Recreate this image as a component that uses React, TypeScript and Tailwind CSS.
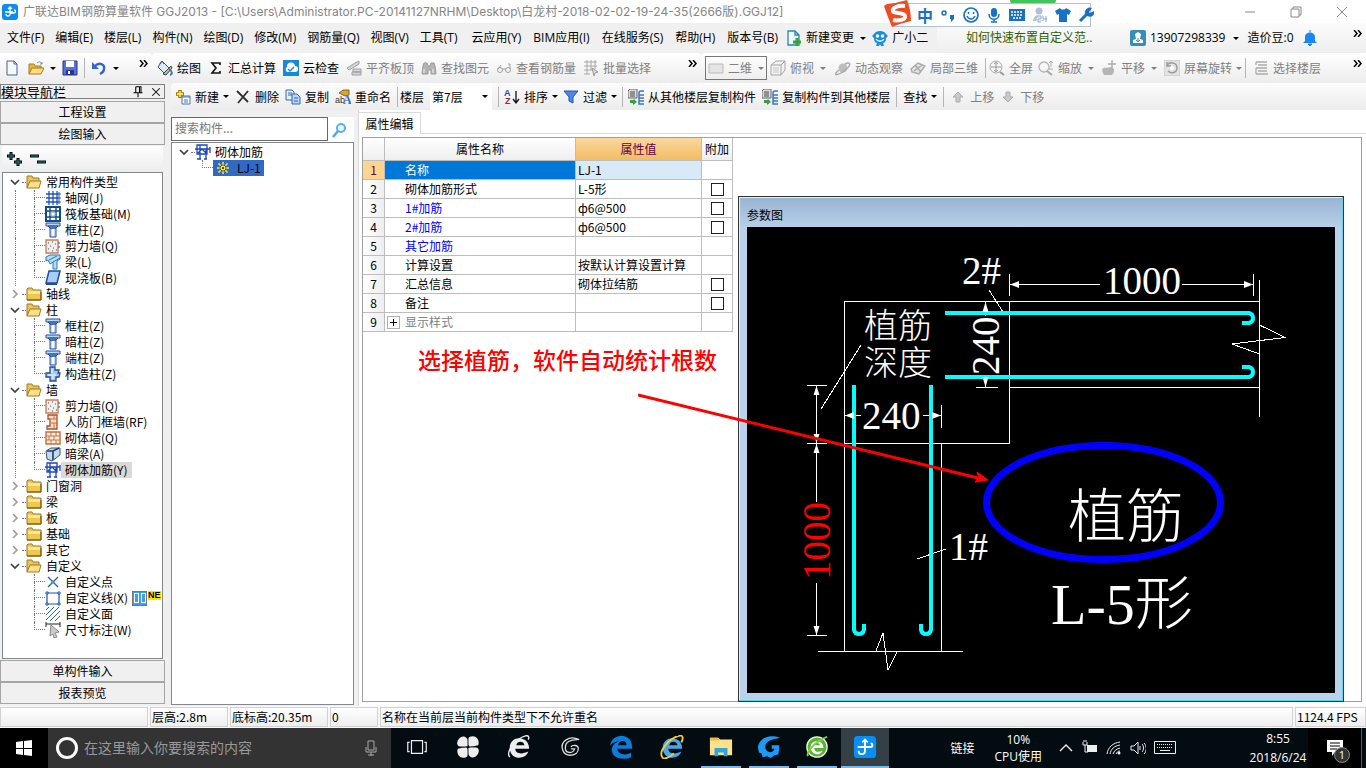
import React from 'react';
import type { ReactNode } from 'react';

const Svg = ({ children, className = 'size-4' }: { children: ReactNode; className?: string }) => (
  <svg viewBox="0 0 16 16" fill="none" aria-hidden="true" className={`shrink-0 ${className}`}>
    {children}
  </svg>
);

const Caret = () => (
  <svg viewBox="0 0 6 3" aria-hidden="true" className="h-[3px] w-1.5 shrink-0 fill-current">
    <path d="M0 0h6L3 3z" />
  </svg>
);

const Logo = () => (
  <Svg>
    <rect width="16" height="16" rx="3" fill="#0a8cf0" />
    <path d="M8 3v7a2 2 0 0 1-4 0M3 8h8M12 6a1.500 1.500 0 0 1 0 3H8M6 5l2-2 2 2" stroke="#fff" strokeWidth="1.3" />
  </Svg>
);

const icons = {
  file: <Svg><path d="M3 1h7l3 3v11H3z" fill="#f6faff" stroke="#45638f" /><path d="M10 1v3h3" stroke="#45638f" /></Svg>,
  open: <Svg><path d="M1 14V4h5l1 2h6v3" fill="#e9b43f" stroke="#a87b1d" /><path d="M1 14l3-6h12l-3 6z" fill="#ffdd80" stroke="#a87b1d" /><path d="M9 3c2-2 4-1 5 1m0-2v2h-2" stroke="#6d8fa8" /></Svg>,
  save: <Svg><path d="M1 1h14v14H1z" fill="#5b6fd6" stroke="#27358f" /><path d="M4 1h8v6H4z" fill="#fff" /><path d="M4 10h8v5H4z" fill="#27358f" /><path d="M6 11h2v3H6z" fill="#fff" /></Svg>,
  undo: <Svg><path d="M4 6c4-4 10-2 9 3 0 2-2 4-4 5" stroke="#3465c8" strokeWidth="2.4" /><path d="M1 2v7h7z" fill="#3465c8" /></Svg>,
  draw: <Svg><path d="M5 1l7 7-5 5-6-6z" fill="#dceaf8" stroke="#31577c" /><path d="M3 4c0-3 3-3 4 0" stroke="#31577c" /><path d="M6 14l8-8 1 2-6 7z" fill="#e7ba4d" stroke="#24476a" /><path d="M12 9c3 2 4 5 1 6" stroke="#3279cf" strokeWidth="2" /></Svg>,
  sigma: <Svg><path d="M12 5V3H4l4 5-4 5h8v-2" stroke="#111" strokeWidth="1.6" /></Svg>,
  cloud: <Svg><path d="M0 0h16v16H0z" fill="#1689d8" /><path d="M4 12a3 3 0 0 1 0-5 4 4 0 0 1 8-1 3 3 0 0 1 0 6z" fill="#fff" /><path d="M5 9l2 2 4-4" stroke="#1689d8" strokeWidth="1.4" /></Svg>,
  align: <Svg><path d="M1 8l8-5 4-2v3L3 10zM6 12h9v3H6zM7 9h8v3H7z" fill="#d4d4d4" stroke="#a0a0a0" /></Svg>,
  find: <Svg><path d="M2 6l1-3h3l1 3h2l1-3h3l1 3 1 8h-5v-4H7v4H1z" fill="#b4b4b4" stroke="#999" /><path d="M3 9v4M12 9v4" stroke="#f4f4f4" /></Svg>,
  glasses: <Svg><circle cx="4" cy="10" r="2.5" stroke="#a0a0a0" /><circle cx="12" cy="10" r="2.5" stroke="#a0a0a0" /><path d="M6 9h4M2 9l3-4M14 9V4h-2" stroke="#a0a0a0" /></Svg>,
  batch: <Svg><path d="M1 2h13M1 6h13M1 10h9M4 0v14M8 0v10M12 0v9M1 14h6" stroke="#a8a8a8" /><path d="M9 8l6 4-3 1-1 3z" fill="#ddd" stroke="#999" /></Svg>,
  plane: <Svg><path d="M1 4h14v9H1z" fill="#e4e4e4" stroke="#bbb" /></Svg>,
  cube: <Svg><path d="M1 5l5-4h9v9l-4 5H1zM1 5h10v10M11 5l4-4" fill="#f2f2f2" stroke="#a5a5a5" /><path d="M3 7h6v6H3z" fill="#ddd" /></Svg>,
  orbit: <Svg><circle cx="8" cy="8" r="4.5" fill="#bdbdbd" /><path d="M4 10c-7 6-2 6 5 1s8-10 1-7" stroke="#aaa" strokeWidth="1.5" /></Svg>,
  local: <Svg><path d="M1 9l7-6 7 3-6 8-7-2zM5 5l6 7M4 11l8-6" fill="#e2e2e2" stroke="#aaa" strokeWidth="1.4" /></Svg>,
  full: <Svg><circle cx="7" cy="7" r="6" fill="#f5f5f5" stroke="#aaa" /><path d="M7 2v10M2 7h10M5 4l2-2 2 2M5 10l2 2 2-2" stroke="#999" /><path d="M11 12l4 3" stroke="#999" strokeWidth="2" /></Svg>,
  zoom: <Svg><circle cx="6" cy="7" r="5" stroke="#b5b5b5" strokeWidth="1.3" /><path d="M9 11l5 4" stroke="#aaa" strokeWidth="2" /><path d="M13 1v6M11 3l2-2 2 2M11 9h4" stroke="#aaa" /></Svg>,
  pan: <Svg><path d="M3 15c-4-6 0-9 2-7l5-1c4 1 4 5 1 8z" fill="#b5b5b5" /><path d="M11 0v8M7 4h8" stroke="#aaa" strokeWidth="1.3" /></Svg>,
  rotate: <Svg><path d="M0 0h16v16H0z" fill="#e3e3e3" stroke="#c4c4c4" /><path d="M3 5c4-4 10-2 10 3s-6 6-9 3M3 2v4h4" stroke="#999" strokeWidth="1.4" /><circle cx="8" cy="8" r="2" fill="#fff" /></Svg>,
  floors: <Svg><path d="M3 2h11M5 5h9M3 8h11M5 11h9M3 14h12M3 2v3M3 8v6" stroke="#aaa" strokeWidth="1.3" /></Svg>,
  create: <Svg><path d="M5 1v8M1 5h8" stroke="#9b7600" strokeWidth="3.6" /><path d="M5 2v6M2 5h6" stroke="#ffdf49" strokeWidth="1.8" /><path d="M7 7h8v8H7z" fill="#fff" stroke="#4d70b5" /><path d="M7 8h8M9 11h4M9 13h4" stroke="#4d70b5" strokeWidth="1.2" /></Svg>,
  remove: <Svg><path d="M2 2l11 11M13 2L3 14" stroke="#303030" strokeWidth="1.8" /></Svg>,
  copy: <Svg><path d="M1 1h6l2 2v8H1z" fill="#e5f0ff" stroke="#3966a8" /><path d="M7 5h5l3 3v7H7z" fill="#b9d5fb" stroke="#3966a8" /><path d="M3 4h4M3 6h4M9 9h4M9 12h4" stroke="#3966a8" /></Svg>,
  rename: <Svg><path d="M4 4l4-3h6v5l-4 1z" fill="#d7a72a" stroke="#84651d" /><text x="0" y="14" fontSize="9" fill="#333" fontFamily="Liberation Sans">ab</text><text x="8" y="15" fontSize="12" fontWeight="bold" fill="#326bd0" fontFamily="Liberation Serif">A</text></Svg>,
  sort: <Svg><text x="0" y="7" fontSize="9" fontWeight="bold" fill="#1f48ad" fontFamily="Liberation Sans">A</text><text x="1" y="15" fontSize="9" fontWeight="bold" fill="#a22a2a" fontFamily="Liberation Sans">Z</text><path d="M12 2v12M9 10l3 4 3-4" stroke="#111" strokeWidth="1.3" /></Svg>,
  filter: <Svg><path d="M1 2h14L10 8v6l-4-2V8z" fill="#4c86e8" stroke="#2857a8" /></Svg>,
  floorCopy: <Svg><path d="M2 0h7v9H0V2z" fill="#ddd" stroke="#666" /><path d="M2 3h5M2 5h5M2 7h5" stroke="#444" /><path d="M16 2h-3q-2 0-2 2v11h5M11 6h5M11 9h5M11 12h5" stroke="#3975cd" strokeWidth="1.5" /><path d="M2 11h4l-1-2 4 4-4 3v-2H2z" fill="#36a143" /></Svg>,
  up: <Svg><path d="M8 3l5 5h-3v5H6V8H3z" fill="#cacaca" stroke="#aaa" /></Svg>,
  down: <Svg><path d="M8 13l5-5h-3V3H6v5H3z" fill="#cacaca" stroke="#aaa" /></Svg>,
  change: <Svg><path d="M2 1h7l4 4v10H2zM9 1v4h4" fill="#f4fbff" stroke="#2486b9" strokeWidth="1.3" /><path d="M11 8v8M7 12h8" stroke="#36a143" strokeWidth="3" /></Svg>,
  robot: <Svg><path d="M2 4c2-4 10-4 12 0l2 2-2 2c0 4-2 5-3 5l1 3H9l-1-2-1 2H4l1-3c-1 0-3-1-3-5L0 6z" fill="#168ce0" /><circle cx="5.5" cy="6" r="1.800" fill="#fff" /><circle cx="10.500" cy="6" r="1.800" fill="#fff" /><path d="M4 9c2 3 6 3 8 0" stroke="#fff" strokeWidth="1.300" /></Svg>,
  user: <Svg><rect width="16" height="16" rx="2" fill="#378db9" /><path d="M3 13v-3l3-1-1-5 3-2 3 2-1 5 3 1v3z" fill="#fff" /><path d="M8 8v4M6 10l2 2 2-2" stroke="#378db9" /></Svg>,
  bell: <Svg><path d="M3 11V7c0-6 10-6 10 0v4l2 2H1z" fill="#1c86f2" /><path d="M8 0v2M6 14h4l-2 2z" stroke="#1c86f2" fill="#1c86f2" /></Svg>,
  search: <Svg><circle cx="9" cy="6" r="4" fill="#eef8ff" stroke="#53b1ed" strokeWidth="2" /><path d="M6 9l-5 6" stroke="#53a7e5" strokeWidth="2.5" /></Svg>,
  folder: <Svg><path d="M1 3l1-1h4l1 2h8v10H1z" fill="#f2c84b" stroke="#9c7a28" /><path d="M2 5h12v3H2z" fill="#ffe89e" /><path d="M1 14h14V6" stroke="#6b5014" /></Svg>,
  folderOpen: <Svg><path d="M1 14V2h5l1 2h6v3" fill="#eec257" stroke="#9c7a28" /><path d="M1 14l3-7h11l-2 7z" fill="#ffdf87" stroke="#9c7a28" /></Svg>,
  grid: <Svg><path d="M4 1v14M8 1v14M12 1v14M1 4h12M1 8h12M1 12h12" stroke="#2854b5" strokeWidth="1.3" /><path d="M13 3h2v2h-2zM13 7h2v2h-2zM13 11h2v2h-2z" fill="#fff" stroke="#2854b5" /></Svg>,
  raft: <Svg><path d="M1 1h14v14H1z" fill="#fff" stroke="#124b8c" strokeWidth="2" /><path d="M1 5h14M1 11h14M5 1v14M11 1v14" stroke="#124b8c" strokeWidth="1.4" /><path d="M6 6h4v4H6z" stroke="#87aad2" /></Svg>,
  column: <Svg><path d="M1 1h14v3H1zM3 4h10l-2 2H5zM5 6h6v9H5z" fill="#b9d7fa" stroke="#244fa0" /><path d="M8 7v7" stroke="#fff" strokeWidth="2" /></Svg>,
  shear: <Svg><path d="M1 2h12v13H1z" fill="#eee" stroke="#cb805a" strokeWidth="1.4" /><path d="M3 5h1M7 4h1M10 6h1M5 8h1M3 11h1M8 10h1M11 12h1M7 13h1M13 5h2M13 9h2" stroke="#555" /></Svg>,
  beam: <Svg><path d="M1 3l4-2h10v4l-3 2v8H8V8l-3 2-2-4-2 1z" fill="#b7dcf5" stroke="#2c78bd" /><path d="M4 6l8-4M8 8l7-4" stroke="#2c78bd" /></Svg>,
  slab: <Svg><path d="M4 1h11l-3 12H1z" fill="#a8cef7" stroke="#204d9c" strokeWidth="1.5" /><path d="M1 14h11" stroke="#204d9c" strokeWidth="2" /></Svg>,
  structural: <Svg><path d="M5 1h5v3h4l-1 3h2l-1 4h-3v4H5v-4H1V7h4z" fill="#a8c8ed" stroke="#244e8e" strokeWidth="1.3" /><path d="M7 3v4M3 9h8M8 10v3" stroke="#fff" /></Svg>,
  door: <Svg><path d="M3 1h9v14H2v-3h3V5H3z" fill="#ffe2ca" stroke="#ac4d25" strokeWidth="1.3" /><path d="M6 5h6M6 9h6M9 1v4M9 9v6" stroke="#cb6c3d" /></Svg>,
  brick: <Svg><path d="M1 2h14v12H1z" fill="#fff2e4" stroke="#cb6c3d" strokeWidth="1.4" /><path d="M1 6h14M1 10h14M6 2v4M11 2v4M4 6v4M9 6v4M6 10v4M11 10v4" stroke="#cb6c3d" /></Svg>,
  hiddenBeam: <Svg><path d="M1 5l5-3h9v7l-8 6-5-2z" fill="#c3d9f0" stroke="#3a5579" /><path d="M2 5h6l6-3M8 5v9" stroke="#243e65" strokeWidth="1.600" /></Svg>,
  masonry: <Svg><path d="M2 1h10v9H2zM0 5h15M5 1v14M11 5v10M2 15h4M9 15h3M3 9l4-4 4 4M15 3v6" stroke="#1e48ba" strokeWidth="1.3" /></Svg>,
  point: <Svg><path d="M3 3l4 4M13 3L9 7M3 13l4-4M13 13L9 9" stroke="#2866ac" strokeWidth="1.300" /><path d="M7 7h2v2H7z" fill="#fff" stroke="#2866ac" /></Svg>,
  line: <Svg><path d="M2 3h12v11H2z" stroke="#1755bc" strokeWidth="1.2" /><path d="M1 2h2v2H1zM13 2h2v2h-2zM1 13h2v2H1zM13 13h2v2h-2z" fill="#fff" stroke="#1755bc" /></Svg>,
  area: <Svg><path d="M1 4l3-3M1 9l8-8M1 14L14 1M5 15L15 5M10 15l5-5" stroke="#2868c3" /></Svg>,
  dimension: <Svg><path d="M1 0v5M15 0v5M1 2h14" stroke="#222" /><path d="M6 3l8 7-4 1 2 4-3 1-1-4-3 2z" fill="#ccc" stroke="#888" /></Svg>,
};

type IconName = keyof typeof icons;

interface ToolProps {
  icon?: IconName;
  label: string;
  caret?: boolean;
  tight?: boolean;
  disabled?: boolean;
}

const Tool = ({ icon, label, caret, tight, disabled }: ToolProps) => (
  <button
    type="button"
    disabled={disabled}
    className={`flex h-6 shrink-0 items-center gap-1 ${disabled ? 'text-[#808080]' : 'text-black'}`}
  >
    {icon && icons[icon]}
    <span>{label}</span>
    {caret && <span className={tight ? '' : 'px-0.5'}><Caret /></span>}
  </button>
);

const Divider = () => <span className="h-5 w-px shrink-0 bg-[#b5b5b5]" />;

const More = () => (
  <button type="button" aria-label="更多" className="mb-2.5 ml-auto shrink-0">
    <svg viewBox="0 0 9 7" aria-hidden="true" fill="none" className="h-[7px] w-[9px]">
      <path d="M1 0l3 3.500L1 7M5 0l3 3.500L5 7" stroke="#000" strokeWidth="1.500" />
    </svg>
  </button>
);

const localMenus = ['文件(F)', '编辑(E)', '楼层(L)', '构件(N)', '绘图(D)', '修改(M)', '钢筋量(Q)', '视图(V)', '工具(T)'];
const serviceMenus = ['云应用(Y)', 'BIM应用(I)', '在线服务(S)', '帮助(H)', '版本号(B)'];

const TitleBar = () => (
  <header className="relative flex h-[23px] items-center bg-white text-[#858585]">
    <span className="ml-0.5"><Logo /></span>
    <h1 className="ml-[5px] flex-1 truncate font-[Inter,Noto_Sans_CJK_SC,sans-serif] text-xs">
      广联达BIM钢筋算量软件 GGJ2013 - [C:\Users\Administrator.PC-20141127NRHM\Desktop\白龙村-2018-02-02-19-24-35(2666版).GGJ12]
    </h1>
    <div className="flex w-[124px] items-center gap-[30px]">
      <button type="button" aria-label="最小化"><Svg><path d="M3 8h10" stroke="#888" /></Svg></button>
      <button type="button" aria-label="还原"><Svg><path d="M3 5h8v8H3zM5 5V3h8v8h-2" stroke="#888" /></Svg></button>
      <button type="button" aria-label="关闭"><Svg><path d="M3 3l10 10M13 3L3 13" stroke="#888" /></Svg></button>
    </div>
    <ImeBar />
  </header>
);

const ImeBar = () => (
  <div className="absolute top-0 right-[275px] z-10 pt-[3px] text-[#1a70c5]">
    <div className="absolute top-0 right-[35px] h-1 w-[46px] rounded-b-sm bg-[#43c45c]" />
    <div className="relative flex h-6 w-[198px] items-center gap-[7px] border border-[#afc2da] bg-white pl-[23px]">
      <svg viewBox="0 0 28 28" className="absolute -top-1 -left-2.5 size-7" aria-hidden="true">
        <path d="M3 4Q13 3 23 0q4 10 4 21-9 2-19 6Q3 15 0 6z" fill="#ee4d24" />
        <path d="M21 6c-7-1-13 2-12 5s11 1 12 5-7 5-12 4" fill="none" stroke="#fff" strokeWidth="4" />
      </svg>
      <span className="text-base leading-5 font-bold">中</span>
      <Svg><circle cx="4" cy="6" r="2" stroke="currentColor" strokeWidth="1.5" /><path d="M10 8h4v4l-3 3v-3h-1z" fill="currentColor" /></Svg>
      <Svg><circle cx="8" cy="8" r="7" stroke="currentColor" strokeWidth="1.7" /><path d="M5.500 5v2M10.500 5v2M4 9c2 4 6 4 8 0" stroke="currentColor" strokeWidth="1.5" /></Svg>
      <Svg><rect x="5" y="1" width="6" height="9" rx="3" fill="currentColor" /><path d="M3 7c0 7 10 7 10 0M8 12v3M5 15h6" stroke="currentColor" strokeWidth="1.5" /></Svg>
      <Svg><path d="M0 2h16v12H0z" fill="currentColor" /><path d="M2 5h12M2 8h12M4 11h8" stroke="#fff" strokeDasharray="2 1" strokeWidth="1.5" /></Svg>
      <Svg><circle cx="7" cy="4" r="3.500" fill="#afc0db" /><path d="M1 14c0-7 10-8 11-4v4z" fill="#afc0db" /><path d="M6 9h3v3H6v3h3M11 9v3h4M14 9v6" stroke="#fff" strokeWidth="2.500" /><path d="M6 9h3v3H6v3h3M11 9v3h4M14 9v6" stroke="#8ba2c6" /></Svg>
      <Svg><path d="M5 1c1 2 5 2 6 0l5 3-2 4-2-1v8H4V7L2 8 0 4z" fill="currentColor" /></Svg>
      <Svg><path d="M2 14l7-7" stroke="currentColor" strokeWidth="3" /><path d="M14 1l-3 4 1 1 4-2c1 5-3 7-7 5L7 7c-1-4 3-8 7-6z" fill="currentColor" /></Svg>
    </div>
  </div>
);

const MenuBar = () => (
  <nav className="flex h-[30px] items-center overflow-hidden bg-[#f0f0f0] font-[Open_Sans,Noto_Sans_CJK_SC,sans-serif]">
    <div className="flex w-[937px] shrink-0 items-center pl-[7px]">
      <div className="flex gap-[11px]">
        {localMenus.map((menu) => <button key={menu} type="button">{menu}</button>)}
      </div>
      <div className="ml-3.5 flex gap-3">
        {serviceMenus.map((menu) => <button key={menu} type="button">{menu}</button>)}
      </div>
      <div className="ml-2 flex gap-1"><Tool icon="change" label="新建变更" caret /><Tool icon="robot" label="广小二" /></div>
    </div>
    <div className="flex h-full w-[189px] shrink-0 items-center bg-linear-to-b from-[#fbfbfb] to-[#eeeeee] pl-[29px]">
      <a href="#help" className="text-[#306000]">如何快速布置自定义范..</a>
    </div>
    <div className="flex h-full flex-1 items-center gap-1 rounded-l bg-linear-to-b from-[#fbfbfb] to-[#eeeeee] pr-1 pl-1">
      <button type="button" className="flex items-center gap-1">
        {icons.user}<span>13907298339</span><span className="px-1"><Caret /></span>
      </button>
      <span>造价豆:0</span>
      <button type="button" aria-label="消息" className="pl-1">{icons.bell}</button>
      <More />
    </div>
  </nav>
);

const ViewToolbar = () => (
  <div className="flex h-[30px] overflow-hidden">
    <div className="flex w-[152px] shrink-0 items-center rounded-r bg-linear-to-b from-white to-[#ececec] pr-1 pl-1">
      <button type="button" aria-label="新建工程">{icons.file}</button>
      <button type="button" aria-label="打开" className="ml-2 flex items-center gap-1.5">{icons.open}<Caret /></button>
      <button type="button" aria-label="保存" className="mr-1.5 ml-1.5">{icons.save}</button>
      <Divider />
      <button type="button" aria-label="撤销" className="ml-1.5 flex items-center gap-1.5">{icons.undo}<Caret /></button>
      <More />
    </div>
    <div className="flex w-[549px] shrink-0 items-center gap-[7px] rounded bg-linear-to-b from-white to-[#ececec] pr-1 pl-[5px]">
      <Tool icon="draw" label="绘图" />
      <Tool icon="sigma" label="汇总计算" />
      <Tool icon="cloud" label="云检查" />
      <Tool icon="align" label="平齐板顶" disabled />
      <Tool icon="find" label="查找图元" disabled />
      <Tool icon="glasses" label="查看钢筋量" disabled />
      <Tool icon="batch" label="批量选择" disabled />
      <More />
    </div>
    <div className="flex min-w-0 flex-1 items-center gap-[7px] rounded-l bg-linear-to-b from-white to-[#ececec] pr-1 pl-1">
      <label className="-mr-1 flex h-6 w-[62px] shrink-0 items-center border border-[#777] pl-0.5 text-[#808080]">
        {icons.plane}
        <select aria-label="视图维度" disabled className="ml-1 w-[30px] appearance-none"><option>二维</option></select>
        <Caret />
      </label>
      <Tool icon="cube" label="俯视" caret disabled />
      <Tool icon="orbit" label="动态观察" disabled />
      <Tool icon="local" label="局部三维" disabled />
      <Divider />
      <div className="-mr-1 -ml-1 flex gap-[5px]">
        <Tool icon="full" label="全屏" disabled />
        <Tool icon="zoom" label="缩放" caret disabled />
        <Tool icon="pan" label="平移" caret disabled />
        <Tool icon="rotate" label="屏幕旋转" caret tight disabled />
      </div>
      <Divider />
      <Tool icon="floors" label="选择楼层" disabled />
      <More />
    </div>
  </div>
);

const ComponentToolbar = () => (
  <div className="flex h-[27px] shrink-0 items-center gap-1.5 overflow-hidden rounded-l bg-linear-to-b from-[#fcfcfc] to-[#ececec] pl-1">
    <Tool icon="create" label="新建" caret tight />
    <Tool icon="remove" label="删除" />
    <Tool icon="copy" label="复制" />
    <Tool icon="rename" label="重命名" />
    <div className="flex items-center gap-0.5">
      <Divider />
      <label htmlFor="floor">楼层</label>
      <div className="ml-1 flex h-[26px] w-[62px] items-center bg-white pl-0.5">
        <select id="floor" className="w-[50px] appearance-none"><option>第7层</option></select>
        <Caret />
      </div>
    </div>
    <div className="flex items-center gap-[5px]">
      <Divider />
      <Tool icon="sort" label="排序" caret tight />
      <Tool icon="filter" label="过滤" caret tight />
      <Divider />
      <Tool icon="floorCopy" label="从其他楼层复制构件" />
    </div>
    <Tool icon="floorCopy" label="复制构件到其他楼层" />
    <Divider />
    <Tool label="查找" caret tight />
    <Divider />
    <Tool icon="up" label="上移" disabled />
    <Tool icon="down" label="下移" disabled />
  </div>
);

interface Branch {
  label: string;
  children?: [IconName, string][];
}

const branches: Branch[] = [
  {
    label: '常用构件类型',
    children: [['grid', '轴网(J)'], ['raft', '筏板基础(M)'], ['column', '框柱(Z)'], ['shear', '剪力墙(Q)'], ['beam', '梁(L)'], ['slab', '现浇板(B)']],
  },
  { label: '轴线' },
  { label: '柱', children: [['column', '框柱(Z)'], ['column', '暗柱(Z)'], ['column', '端柱(Z)'], ['structural', '构造柱(Z)']] },
  {
    label: '墙',
    children: [['shear', '剪力墙(Q)'], ['door', '人防门框墙(RF)'], ['brick', '砌体墙(Q)'], ['hiddenBeam', '暗梁(A)'], ['masonry', '砌体加筋(Y)']],
  },
  { label: '门窗洞' },
  { label: '梁' },
  { label: '板' },
  { label: '基础' },
  { label: '其它' },
  { label: '自定义', children: [['point', '自定义点'], ['line', '自定义线(X)'], ['area', '自定义面'], ['dimension', '尺寸标注(W)']] },
];

const Chevron = ({ open }: { open?: boolean }) => (
  <svg viewBox="0 0 10 10" aria-hidden="true" fill="none" className="size-2.5 shrink-0">
    <path d={open ? 'M1 3l4 4 4-4' : 'M3 1l4 4-4 4'} stroke={open ? '#404040' : '#a0a0a0'} strokeWidth="1.7" />
  </svg>
);

const Elbow = ({ last }: { last?: boolean }) => (
  <span className="flex h-4 w-[11px] shrink-0 flex-col">
    <span className="h-2 border-b border-l border-dotted border-[#777]" />
    {!last && <span className="h-2 border-l border-dotted border-[#777]" />}
  </span>
);

const NewBadge = () => (
  <span className="flex items-start">
    <span className="flex h-[15px] w-[15px] items-center justify-center gap-0.5 border border-[#777] bg-[#3b9fec]">
      <i className="h-2.5 w-[5px] border border-white" /><i className="h-2.5 w-[5px] border border-white" />
    </span>
    <span className="ml-px bg-[#ffe000] font-[Liberation_Sans,sans-serif] text-[9px] leading-[9px] font-bold">NE</span>
  </span>
);

const ComponentTree = () => (
  <ul className="mx-0.5 flex-1 overflow-hidden border border-[#828790] bg-white pt-px leading-4">
    {branches.map((branch, i) => (
      <li key={branch.label}>
        <div className="flex h-4 items-center pl-[7px]">
          <Chevron open={!!branch.children} />
          <span className="ml-0.5 w-1 border-t border-dotted border-[#777]" />
          {branch.children ? icons.folderOpen : icons.folder}
          <span className="ml-1">{branch.label}</span>
        </div>
        {branch.children && (
          <ul>
            {branch.children.map(([icon, label], j) => {
              const selected = label === '砌体加筋(Y)';
              return (
                <li key={label} className="flex h-4 items-center pl-3">
                  <span className={`h-4 w-[19px] shrink-0 ${i < branches.length - 1 ? 'border-l border-dotted border-[#777]' : ''}`} />
                  <Elbow last={j === branch.children!.length - 1} />
                  {icons[icon]}
                  <span className={`h-4 pr-1 pl-1 whitespace-nowrap ${selected ? 'bg-[#d9d9d9]' : ''}`}>{label}</span>
                  {label === '自定义线(X)' && <NewBadge />}
                </li>
              );
            })}
          </ul>
        )}
      </li>
    ))}
  </ul>
);

const NavButton = ({ label }: { label: string }) => (
  <button type="button" className="h-[22px] shrink-0 border border-[#a5a5a5] bg-[#f0f0f0] leading-5">{label}</button>
);

const Navigator = () => (
  <aside className="flex w-[165px] shrink-0 flex-col pt-px pb-0.5">
    <div className="flex h-[15px] items-center border border-[#808080] leading-3">
      <h2 className="flex-1 text-[13px]">模块导航栏</h2>
      <button type="button" aria-label="固定" className="mr-1.5"><Svg className="size-3"><path d="M5 1h7v8M5 1v8M2 9h12M8 9v6M10 1v8" stroke="#000" strokeWidth="1.4" /></Svg></button>
      <button type="button" aria-label="关闭导航栏" className="mr-0.5"><Svg className="size-3"><path d="M3 3l10 10M13 3L3 13" stroke="#000" strokeWidth="1.4" /></Svg></button>
    </div>
    <div className="mt-0.5 flex flex-1 flex-col">
      <NavButton label="工程设置" />
      <NavButton label="绘图输入" />
      <div className="mx-0.5 mt-px flex h-[26px] shrink-0 items-center bg-linear-to-b from-white to-[#ececec] pl-1">
        <button type="button" aria-label="全部展开"><Svg><path d="M5 1v8M1 5h8M12 7v8M8 11h8" stroke="#000" strokeWidth="3" /><path d="M5 2v6M2 5h6M12 8v6M9 11h6" stroke="#169090" /></Svg></button>
        <button type="button" aria-label="全部折叠" className="ml-2"><Svg><path d="M0 5h9M7 11h9" stroke="#000" strokeWidth="3" /><path d="M1 5h7M8 11h7" stroke="#169090" /></Svg></button>
      </div>
      <ComponentTree />
      <div className="mt-px flex flex-col"><NavButton label="单构件输入" /><NavButton label="报表预览" /></div>
    </div>
  </aside>
);

const ComponentList = () => (
  <section className="flex w-[183px] shrink-0 flex-col pt-[7px] pb-px">
    <div className="flex h-[25px] bg-white pr-1">
      <input type="search" aria-label="搜索构件" placeholder="搜索构件..." className="h-6 w-[157px] border border-[#686868] px-[3px] pb-1 placeholder:text-[#777]" />
      <button type="button" aria-label="搜索" className="ml-1">{icons.search}</button>
    </div>
    <ul className="flex-1 border border-[#828790] bg-white pt-px leading-4">
      <li>
        <div className="flex h-4 items-center pl-[7px]"><Chevron open /><span className="ml-0.5 w-1 border-t border-dotted border-[#777]" />{icons.masonry}<span className="ml-1">砌体加筋</span></div>
        <ul>
          <li className="flex h-4 items-center pl-[30px]">
            <Elbow last />
            <span className="flex h-4 w-[51px] items-center gap-2 bg-[#316ac5] pl-1">
              <Svg className="size-3"><path d="M8 0v16M0 8h16M2 2l12 12M14 2L2 14" stroke="#ffef3b" strokeWidth="2" /><circle cx="8" cy="8" r="4" fill="#ffef3b" stroke="#333" /><circle cx="8" cy="8" r="1.500" fill="#333" /></Svg>
              LJ-1
            </span>
          </li>
        </ul>
      </li>
    </ul>
  </section>
);

interface Property {
  name: string;
  value?: string;
  check?: boolean;
  tone?: string;
}

const properties: Property[] = [
  { name: '名称', value: 'LJ-1' },
  { name: '砌体加筋形式', value: 'L-5形', check: true },
  { name: '1#加筋', value: 'ф6@500', check: true, tone: 'text-[#0000ff]' },
  { name: '2#加筋', value: 'ф6@500', check: true, tone: 'text-[#0000ff]' },
  { name: '其它加筋', tone: 'text-[#0000ff]' },
  { name: '计算设置', value: '按默认计算设置计算' },
  { name: '汇总信息', value: '砌体拉结筋', check: true },
  { name: '备注', check: true },
  { name: '显示样式', tone: 'text-[#808080]' },
];

const PropertyTable = () => (
  <table className="w-[370px] table-fixed border-separate border-spacing-0 leading-4">
    <colgroup><col className="w-[22px]" /><col className="w-[191px]" /><col className="w-[126px]" /><col className="w-[31px]" /></colgroup>
    <thead>
      <tr className="h-[23px] bg-linear-to-b from-white to-[#eeeeee]">
        <th className="border-r border-b border-[#bdbdbd]" />
        <th className="border-r border-b border-[#bdbdbd] font-normal">属性名称</th>
        <th className="border-r border-b border-[#bdbdbd] bg-linear-to-b from-[#fad7a0] to-[#f1bd5e] font-normal text-[#600050]">属性值</th>
        <th className="border-r border-b border-[#bdbdbd] font-normal whitespace-nowrap">附加</th>
      </tr>
    </thead>
    <tbody>
      {properties.map((row, i) => (
        <tr key={row.name} className="h-[19px]">
          <th scope="row" className={`border-r border-b border-[#bdbdbd] p-0 font-normal ${i === 0 ? 'bg-[#ffd58d] text-[#600050]' : 'bg-linear-to-r from-white to-[#eeeeee]'}`}>{i + 1}</th>
          <td className={`border-r border-b border-[#bdbdbd] p-0 ${i === 0 ? 'bg-[#0078d7] text-white' : row.tone ?? ''}`}>
            <div className="flex items-center">
              <span className="flex w-5 shrink-0 pl-0.5">
                {i === 8 && <button type="button" aria-label="展开" className="size-[13px] border border-[#b0b0b0] text-black"><svg viewBox="0 0 11 11" className="size-[11px]"><path d="M2 5.500h7M5.500 2v7" stroke="currentColor" /></svg></button>}
              </span>
              {row.name}
            </div>
          </td>
          <td className={`border-r border-b border-[#bdbdbd] py-0 pr-0 pl-0.5 ${i === 0 ? 'bg-[#d8e9f8]' : ''}`}>{row.value}</td>
          <td className="border-r border-b border-[#bdbdbd] p-0">
            {row.check && <input type="checkbox" aria-label={`${row.name}附加`} className="mx-auto block size-[13px] appearance-none border border-[#222] bg-white" />}
          </td>
        </tr>
      ))}
    </tbody>
  </table>
);

// section drawing of the L-shaped wall joint
const RebarDrawing = () => (
  <svg viewBox="747 227 588 466" role="img" aria-label="L-5形" className="block h-[466px] w-[588px] bg-black font-[Liberation_Serif,Noto_Sans_CJK_SC,serif] font-light">
    <g fill="none" stroke="#fff" shapeRendering="crispEdges">
      <path d="M844.500 651.500V301.500H1259.500M1009.500 301.500V443.500H844.500M1009.500 387.500H1259.500M1259.500 280V417M941.500 443.500V651.500M818 651.500H963" />
      <path d="M1009.500 274V296M1253.500 274V296M1009 284.500H1100M1182 284.500H1253M985.500 302V316M985.500 375V387M976 387.500H998" />
      <path d="M816.500 385V502M816.500 583V635M807 385.500H827M807 443.500H827M807 635.500H827M845 415.500H861M923 415.500H941M941.500 405V428" />
      <path d="M1259.500 325L1285 337.500 1232 344 1259.500 354M876 651L883 633 888 670 897 652M989 290L1003 312M861 345L821 409M917 559L946 549" />
    </g>
    <g fill="none" stroke="#0ff" strokeWidth="4">
      <path d="M945 313H1249Q1253 314 1253 318T1249 323H1242M945 377H1249Q1253 376 1253 372T1249 367H1242" />
      <path d="M854 385V630Q855 634 859 634T864 630V624M931 385V630Q930 634 926 634T921 630V624" />
    </g>
    <g fill="#fff">
      <path d="M1010 284.500l9-3.500v7zM1253 284.500l-9-3.500v7zM845 415.500l9-3.500v7zM941 415.500l-9-3.500v7z" />
      <path d="M985.500 302l-3 10h6zM985.500 387l-3-10h6zM816.500 386l-3 9h6zM816.500 443l-3-9h6zM816.500 444l-3 9h6zM816.500 635l-3-9h6z" />
      <text x="962" y="284" fontSize="39">2#</text>
      <text x="1103" y="294" fontSize="39">1000</text>
      <text x="864" y="338" fontSize="34">植筋</text>
      <text x="864" y="375" fontSize="34">深度</text>
      <text x="862" y="429" fontSize="39">240</text>
      <text x="949" y="560" fontSize="39">1#</text>
      <text transform="translate(999 375) rotate(-90)" fontSize="39">240</text>
      <text x="1068" y="537" fontSize="58">植筋</text>
      <text x="1051" y="624" fontSize="58">L-5形</text>
    </g>
    <text transform="translate(830 580) rotate(-90)" fontSize="39" fill="#f00">1000</text>
    <ellipse cx="1103.500" cy="502.500" rx="117" ry="57" fill="none" stroke="#00f" strokeWidth="7" />
  </svg>
);

const PropertyEditor = () => (
  <section className="flex min-w-0 flex-1 flex-col border-l border-[#dadada] bg-white pt-0.5 pb-1">
    <div className="flex h-[22px] shrink-0">
      <button type="button" className="w-[62px] border-t border-r border-[#dadada]">属性编辑</button>
      <div className="flex-1 border-b border-[#dadada]" />
    </div>
    <div className="relative mt-[3px] mr-1 ml-[3px] min-h-[565px] flex-1 border border-[#a0a0a0]">
      <PropertyTable />
      <p className="mt-2.5 pl-[55px] text-[23px] leading-[34px] font-medium text-[#ff0000]">选择植筋，软件自动统计根数</p>
      <div className="absolute top-[58px] left-[375px] border border-[#333] bg-linear-to-b from-[#98b4d2] to-[#b9d1ea] to-[32px] px-2 pb-2 shadow-[inset_-1px_-1px_0_#58d8f0,inset_1px_1px_0_#e4eef8]">
        <h2 className="flex h-[30px] items-end pb-1 leading-4">参数图</h2>
        <RebarDrawing />
      </div>
      <svg viewBox="638 390 352 96" aria-hidden="true" className="absolute top-[252px] left-[275px] h-24 w-[352px]">
        <path d="M638 395L978 478" stroke="#f00" strokeWidth="3" />
        <path d="M988 480l-11-8 2 6-4 4z" fill="#f00" stroke="#f00" />
      </svg>
    </div>
  </section>
);

const Pane = ({ className = '', children }: { className?: string; children?: ReactNode }) => (
  <span className={`h-5 border border-[#d2d2d2] bg-linear-to-b from-white to-[#eeeeee] pl-px leading-[18px] whitespace-nowrap ${className}`}>{children}</span>
);

const StatusBar = () => (
  <footer className="flex h-[22px] shrink-0 items-center gap-0.5 bg-[#f8f8f8]">
    <Pane className="w-[148px]" />
    <Pane className="w-[78px]">层高:2.8m</Pane>
    <Pane className="w-[98px]">底标高:20.35m</Pane>
    <Pane className="w-12">0</Pane>
    <Pane className="flex-1">名称在当前层当前构件类型下不允许重名</Pane>
    <Pane className="w-[71px]">1124.4 FPS</Pane>
  </footer>
);

const LargeE = ({ color }: { color: string }) => (
  <path d="M3 14c0-14 21-14 21 1H9c0 6 8 6 14 3-3 10-20 9-20-4zm7-3h9c-1-5-8-5-9 0z" fill={color} fillRule="evenodd" />
);

const apps: { name: string; state?: string; art: ReactNode }[] = [
  { name: '任务视图', art: <path d="M7 6h12v14H7zM5 8H3v10h2M21 8h2v10h-2" fill="none" stroke="#eee" strokeWidth="1.3" /> },
  { name: '风扇', art: <g fill="#eee"><path d="M2 6c3-6 10-6 11 1v5C6 15-1 13 2 6z" /><path d="M15 2c7-3 11 4 9 9l-9 2c-4-4-4-8 0-11z" /><path d="M24 20c-3 6-10 6-11-1v-5c7-3 14-1 11 6z" /><path d="M11 24c-7 3-11-4-9-9l9-2c4 4 4 8 0 11z" /><path d="M13 3v10h10M3 13h10v10" stroke="#030c10" fill="none" strokeWidth="1" /></g> },
  { name: '浏览器', art: <><LargeE color="#eee" /><path d="M3 24C-2 18 10 4 20 1c4-1 4 2 3 4" fill="none" stroke="#eee" strokeWidth="1.5" /></> },
  { name: '助手', art: <path d="M23 5c-11-5-21 2-18 11 3 9 17 7 17-1 0-5-7-4-8-2m7-8c-8 0-13 3-13 8-1 7 8 8 10 2h-4" fill="none" stroke="#ddd" strokeWidth="1.4" /> },
  { name: 'Edge', art: <path d="M1 12C3-3 25-3 25 13v2H9c0 6 9 8 15 4v5C15 28 3 25 3 16c0-5 4-8 8-9-6 0-9 3-10 5zm9-1h9c0-6-8-6-9 0z" fill="#0b7bdc" fillRule="evenodd" /> },
  { name: 'Internet Explorer', art: <><LargeE color="#43a9ef" /><path d="M3 25C-3 18 10 4 20 1c6-2 5 4 3 7M3 25c4 1 9-2 12-5" fill="none" stroke="#fdc832" strokeWidth="2" /></> },
  { name: '文件资源管理器', state: 'mx-1 w-10 border-[#76b9ed]', art: <><path d="M1 3h9l2 2h13v17H1z" fill="#ffe18a" /><path d="M1 3h9l1 3H1z" fill="#efb945" /><path d="M6 23v-9h14v9h-4v-4h-6v4z" fill="#2ba7e0" /></> },
  { name: '广联达', state: 'mx-1 w-10 border-[#76b9ed]', art: <path d="M25 3C11-2 2 5 1 13l1 6 3 1 1 4 5-1 4 2 4-3 4-1 1-5v-5h-8v4h3c-2 6-10 4-10-2 0-7 7-8 16-10z" fill="#1c9bf6" /> },
  { name: '360浏览器', state: 'mx-1 w-10 border-[#76b9ed]', art: <><circle cx="13" cy="13" r="11" fill="#58b42e" stroke="#f2f8ec" strokeWidth="1.4" /><path d="M6 13c0-8 14-9 14 1H10c0 5 5 5 9 3-3 7-13 4-13-4zm4-2h6c0-3-5-3-6 0z" fill="#fff" fillRule="evenodd" /><path d="M3 23C1 17 14 5 24 2" fill="none" stroke="#7ed04b" strokeWidth="2" /></> },
  { name: '广联达BIM钢筋算量软件', state: 'w-12 border-[#76b9ed] bg-[#344045]', art: <><rect x="1" y="1" width="24" height="24" rx="4" fill="#078ff5" /><path d="M13 6v11c0 5-7 5-7 0M5 13h14a2 2 0 0 0 0-4M10 8l3-3 3 3" fill="none" stroke="#fff" strokeWidth="2" /></> },
];

const Taskbar = () => (
  <div className="flex h-10 shrink-0 bg-[#030c10] font-[Open_Sans,Noto_Sans_CJK_SC,sans-serif] text-white">
    <button type="button" aria-label="开始" className="flex w-12 items-center justify-center bg-black"><Svg><path d="M0 2l7-1v7H0zM8 1l8-1v8H8zM0 9h7v6l-7-1zM8 9h8v7l-8-1z" fill="#fff" /></Svg></button>
    <div className="flex w-[343px] shrink-0 items-center bg-[#333] px-2">
      <span className="size-[22px] rounded-full border-3 border-white" />
      <input aria-label="搜索" placeholder="在这里输入你要搜索的内容" className="ml-1.5 min-w-0 flex-1 text-sm placeholder:text-[#999]" />
      <button type="button" aria-label="语音" className="mr-1"><Svg><path d="M5 1h6v9H5zM3 7v5h10V7M8 12v4M5 15h6" stroke="#aaa" /></Svg></button>
    </div>
    <div className="flex">
      {apps.map((app) => (
        <button key={app.name} type="button" aria-label={app.name} className={`flex items-center justify-center border-b-2 ${app.state ?? 'w-[51px] border-transparent'}`}>
          <svg viewBox="0 0 26 26" aria-hidden="true" className="size-6">{app.art}</svg>
        </button>
      ))}
    </div>
    <div className="ml-auto flex items-center text-xs leading-[17px]">
      <span className="mr-5">链接</span>
      <span className="mr-4 text-center">10%<br />CPU使用</span>
      <div className="flex items-center gap-2 text-[#eee]">
        <Svg><path d="M2 11l6-6 6 6" stroke="currentColor" strokeWidth="1.4" /></Svg>
        <Svg><path d="M5 5h10v7H5z" fill="currentColor" /><path d="M1 2v3h4V2M3 5v7h3M2 0v2M4 0v2" stroke="currentColor" /></Svg>
        <Svg><path d="M1 14C2 7 7 3 14 2M4 14c1-5 4-8 10-9M7 14c1-3 3-5 7-6M10 14c1-2 2-3 4-3" stroke="currentColor" /><circle cx="13" cy="13" r="1.500" fill="currentColor" /></Svg>
        <Svg><path d="M1 6h3l4-4v12l-4-4H1zM10 6v4M12 4c2 2 2 6 0 8M14 3c3 3 3 8 0 11" stroke="currentColor" /></Svg>
        <svg viewBox="0 0 22 14" aria-hidden="true" fill="none" className="h-3.5 w-[22px]"><path d="M.5.5h21v12H.5z" stroke="currentColor" /><path d="M3 3.500h16M3 6.500h16" stroke="currentColor" strokeDasharray="1 1" /><path d="M6 9.500h10" stroke="currentColor" /></svg>
      </div>
      <span className="ml-[72px] w-[60px] text-center leading-[19px]">8:55<br />2018/6/24</span>
      <button type="button" aria-label="1条新通知" className="relative flex h-10 w-[54px] items-center justify-center border-r border-[#555] bg-black">
        <svg viewBox="0 0 16 16" aria-hidden="true" className="size-4"><path d="M0 0h16v12H8l-3 4v-4H0z" fill="#fff" /><path d="M3 3h10M3 6h10M3 9h7" stroke="#000" /></svg>
        <span className="absolute top-[19px] left-[26px] size-4 rounded-full border border-[#888] bg-[#333] text-center text-[11px] leading-[14px]">1</span>
      </button>
      <span className="w-1" />
    </div>
  </div>
);

const App = () => (
  <div className="flex min-h-screen flex-col overflow-hidden bg-[#f0f0f0] font-[Noto_Sans_CJK_SC,sans-serif] text-xs text-black">
    <TitleBar />
    <MenuBar />
    <ViewToolbar />
    <main className="flex flex-1">
      <Navigator />
      <div className="ml-1.5 flex min-w-0 flex-1 flex-col">
        <ComponentToolbar />
        <div className="flex flex-1">
          <ComponentList />
          <div className="w-1 shrink-0" />
          <PropertyEditor />
        </div>
      </div>
    </main>
    <StatusBar />
    <Taskbar />
  </div>
);

export default App;
